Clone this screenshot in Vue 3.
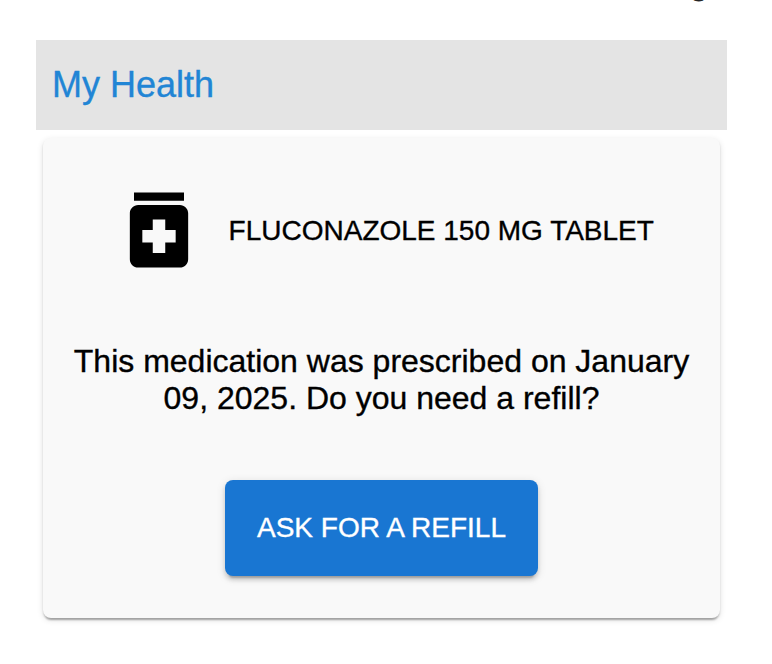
<script setup>
const medication = 'FLUCONAZOLE 150 MG TABLET'
const prescribed = 'January 09, 2025'
</script>

<template>
  <main class="page">
    <div class="top"><span class="top-text">g</span></div>
    <header class="bar"><h1 class="title">My Health</h1></header>
    <section class="card">
      <div class="med">
        <svg class="icon" viewBox="0 0 24 24" aria-hidden="true">
          <path d="M6 3h12v2H6zm11 3H7c-1.1 0-2 .9-2 2v11c0 1.1.9 2 2 2h10c1.1 0 2-.9 2-2V8c0-1.1-.9-2-2-2m-1 9h-2.5v2.5h-3V15H8v-3h2.5V9.5h3V12H16z" />
        </svg>
        <span class="name">{{ medication }}</span>
      </div>
      <p class="message">This medication was prescribed on {{ prescribed }}. Do you need a refill?</p>
      <button class="refill" type="button"><span class="label">ASK FOR A REFILL</span></button>
    </section>
  </main>
</template>

<style>
body {
  background: #fff;
}
</style>

<style scoped>
.page {
  box-sizing: border-box;
  width: 772px;
  height: 664px;
  padding: 0 45px 0 36px;
  overflow: hidden;
  font-family: "Liberation Sans", Arial, sans-serif;
  color: #000;
  -webkit-text-stroke: 0.35px currentColor;
}
.top {
  display: flex;
  justify-content: flex-end;
  align-items: flex-end;
  height: 40px;
  padding-right: 18px;
  overflow: hidden;
}
.top-text {
  font-size: 36px;
  line-height: 40px;
  margin-bottom: 39px;
  color: #222;
  -webkit-text-stroke: 0.8px currentColor;
}
.bar {
  display: flex;
  align-items: center;
  height: 90px;
  padding-left: 16px;
  background: #e4e4e4;
}
.title {
  margin: 0;
  font-size: 36px;
  line-height: 42px;
  font-weight: 400;
  color: #2185d5;
}
.card {
  box-sizing: border-box;
  display: flex;
  flex-direction: column;
  align-items: center;
  height: 480px;
  margin: 8px 7px 0;
  padding-top: 42px;
  border-radius: 8px;
  background: #f9f9f9;
  box-shadow: 0 4px 2px -2px rgba(0, 0, 0, 0.2), 0 2px 2px rgba(0, 0, 0, 0.14), 0 2px 6px rgba(0, 0, 0, 0.12);
}
.med {
  display: flex;
  align-items: center;
  align-self: flex-start;
  height: 100px;
  margin-left: 65.6px;
}
.icon {
  width: 100px;
  height: 100px;
  flex: none;
}
.name {
  margin-left: 20px;
  padding-top: 2px;
  font-size: 28px;
  line-height: 32px;
  white-space: nowrap;
}
.message {
  width: 640px;
  margin: 63px 0 0;
  font-size: 32px;
  line-height: 37px;
  text-align: center;
}
.refill {
  display: flex;
  align-items: center;
  justify-content: center;
  width: 313px;
  height: 96px;
  margin: 63px 0 0;
  padding: 0;
  border: 0;
  border-radius: 8px;
  background: #1976d2;
  color: #fff;
  font-family: inherit;
  font-size: 28px;
  line-height: 32px;
  box-shadow: 0 6px 2px -4px rgba(0, 0, 0, 0.2), 0 4px 4px rgba(0, 0, 0, 0.14), 0 2px 10px rgba(0, 0, 0, 0.12);
}
.label {
  padding-bottom: 1px;
  white-space: nowrap;
}
</style>
